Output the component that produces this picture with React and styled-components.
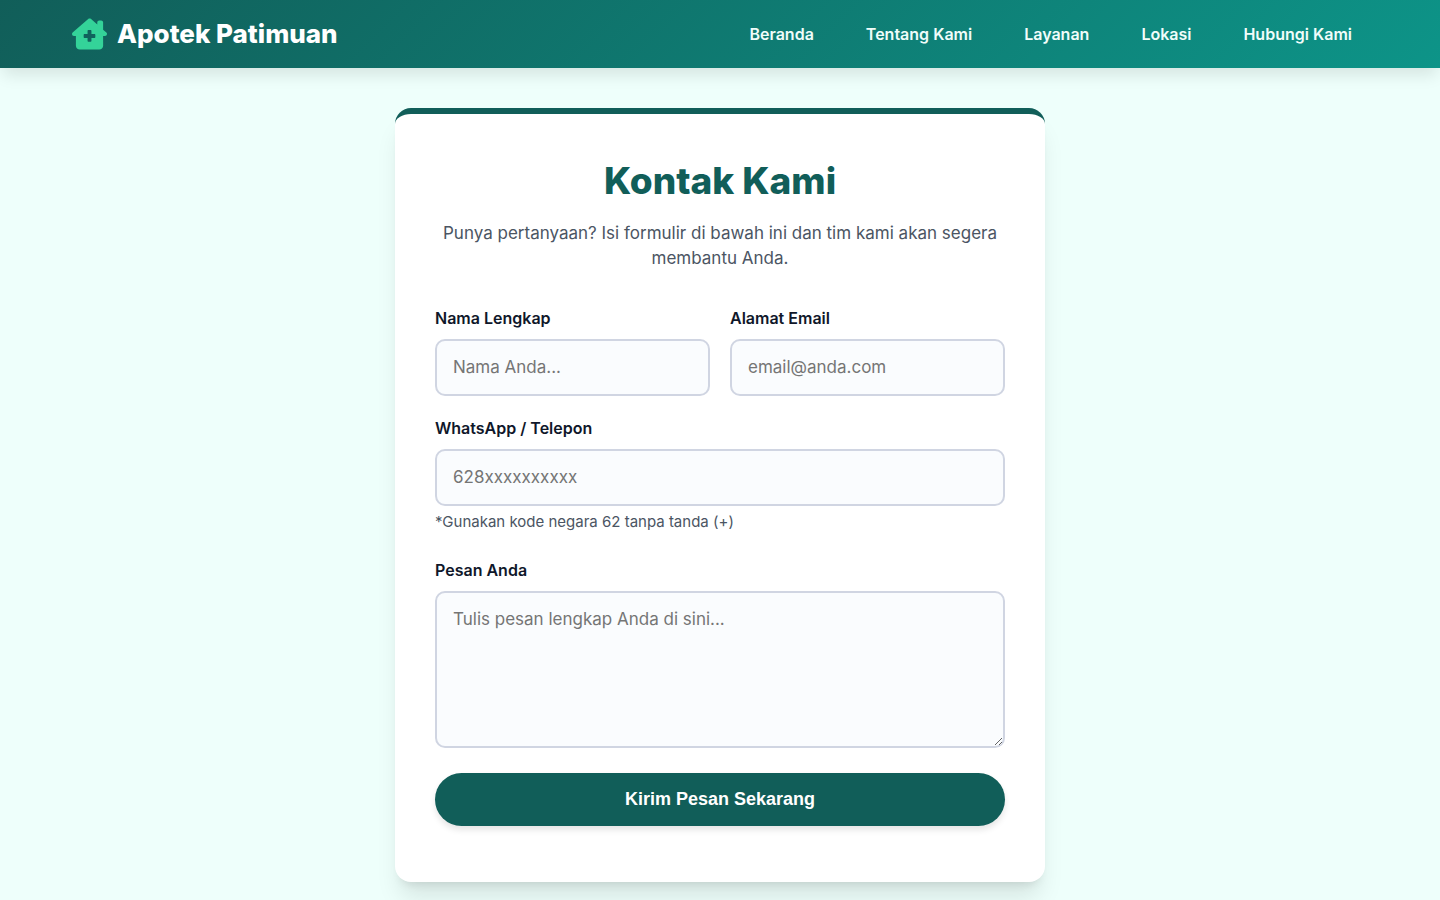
import React from 'react';
import styled, { createGlobalStyle } from 'styled-components';
import { FaHouseChimneyMedical } from 'react-icons/fa6';

const GlobalStyle = createGlobalStyle`
  * {
    box-sizing: border-box;
  }

  body {
    margin: 0;
    background: #eefffb;
    color: #0f172a;
    font-family: Inter, "Open Sans", sans-serif;
    font-size: 17px;
    line-height: 25px;
  }
`;

const links = [
  { label: 'Beranda', href: '#beranda' },
  { label: 'Tentang Kami', href: '#tentang' },
  { label: 'Layanan', href: '#layanan' },
  { label: 'Lokasi', href: '#lokasi' },
  { label: 'Hubungi Kami', href: '#kontak' },
];

const App = () => {
  return (
    <>
      <GlobalStyle />
      <Header>
        <Brand href="#beranda">
          <FaHouseChimneyMedical aria-hidden="true" />
          Apotek Patimuan
        </Brand>
        <Nav>
          {links.map((link) => (
            <NavLink key={link.href} href={link.href}>{link.label}</NavLink>
          ))}
        </Nav>
      </Header>
      <Main>
        <Card>
          <Title>Kontak Kami</Title>
          <Intro>Punya pertanyaan? Isi formulir di bawah ini dan tim kami akan segera membantu Anda.</Intro>
          <Form onSubmit={(e) => e.preventDefault()}>
            <Row>
              <Field>
                <Label htmlFor="nama">Nama Lengkap</Label>
                <Input id="nama" type="text" placeholder="Nama Anda..." />
              </Field>
              <Field>
                <Label htmlFor="email">Alamat Email</Label>
                <Input id="email" type="email" placeholder="email@anda.com" />
              </Field>
            </Row>
            <Field>
              <Label htmlFor="telepon">WhatsApp / Telepon</Label>
              <Input id="telepon" type="tel" placeholder="628xxxxxxxxxx" aria-describedby="telepon-hint" />
              <Hint id="telepon-hint">*Gunakan kode negara 62 tanpa tanda (+)</Hint>
            </Field>
            <Field>
              <Label htmlFor="pesan">Pesan Anda</Label>
              <Message id="pesan" rows={5} placeholder="Tulis pesan lengkap Anda di sini..." />
            </Field>
            <SubmitButton type="submit">Kirim Pesan Sekarang</SubmitButton>
          </Form>
        </Card>
      </Main>
    </>
  );
};

const Header = styled.header`
  position: sticky;
  top: 0;
  display: flex;
  justify-content: space-between;
  align-items: center;
  min-height: 68px;
  padding: 0 5%;
  background: linear-gradient(135deg, #115e59, #0d9488);
  box-shadow: 0 10px 15px -3px rgba(0, 0, 0, 0.1);
`;

const Brand = styled.a`
  display: flex;
  align-items: center;
  gap: 10px;
  color: #fff;
  font-size: 26px;
  font-weight: 800;
  line-height: 24px;
  text-decoration: none;

  svg {
    width: 35px;
    height: 32px;
    color: #34d399;
  }
`;

const Nav = styled.nav`
  display: flex;
  gap: 20px;
`;

const NavLink = styled.a`
  padding: 8px 16px;
  color: #f0fdfa;
  font-size: 16px;
  font-weight: 600;
  text-decoration: none;
`;

const Main = styled.main`
  padding: 40px 20px;
`;

const Card = styled.section`
  max-width: 650px;
  margin: 0 auto;
  padding: 40px 40px 56px;
  background: #fff;
  border-top: 6px solid #115e59;
  border-radius: 16px;
  box-shadow: 0 20px 25px -5px rgba(0, 0, 0, 0.1), 0 8px 10px -6px rgba(0, 0, 0, 0.1);
`;

const Title = styled.h1`
  margin: 0 0 13px;
  color: #115e59;
  font-size: 37px;
  font-weight: 800;
  line-height: 54px;
  text-align: center;
`;

const Intro = styled.p`
  margin: 0 0 35px;
  color: #4b5563;
  text-align: center;
`;

const Form = styled.form`
  display: flex;
  flex-direction: column;
  gap: 20px;
`;

const Row = styled.div`
  display: grid;
  grid-template-columns: 1fr 1fr;
  gap: 20px;
`;

const Field = styled.div`
  display: flex;
  flex-direction: column;
`;

const Label = styled.label`
  margin-bottom: 8px;
  font-size: 16px;
  font-weight: 600;
`;

const Input = styled.input`
  width: 100%;
  padding: 14px 16px;
  border: 2px solid #d0d5e2;
  border-radius: 10px;
  background: #fafcfe;
  color: inherit;
  font: inherit;

  &::placeholder {
    color: #757575;
  }

  &:focus {
    border-color: #0d9488;
    outline: none;
  }
`;

const Message = styled(Input).attrs({ as: 'textarea' })`
  display: block;
  resize: vertical;
`;

const Hint = styled.small`
  margin: 5px 0;
  color: #4b5563;
  font-size: 15px;
  line-height: 22px;
`;

const SubmitButton = styled.button`
  margin-top: 5px;
  padding: 14px;
  border: none;
  border-radius: 50px;
  background: #115e59;
  box-shadow: 0 4px 6px rgba(0, 0, 0, 0.1);
  color: #fff;
  font-family: "Liberation Sans", Arial, sans-serif;
  font-size: 18px;
  font-weight: 700;
  line-height: 25px;
  cursor: pointer;
`;

export default App;
